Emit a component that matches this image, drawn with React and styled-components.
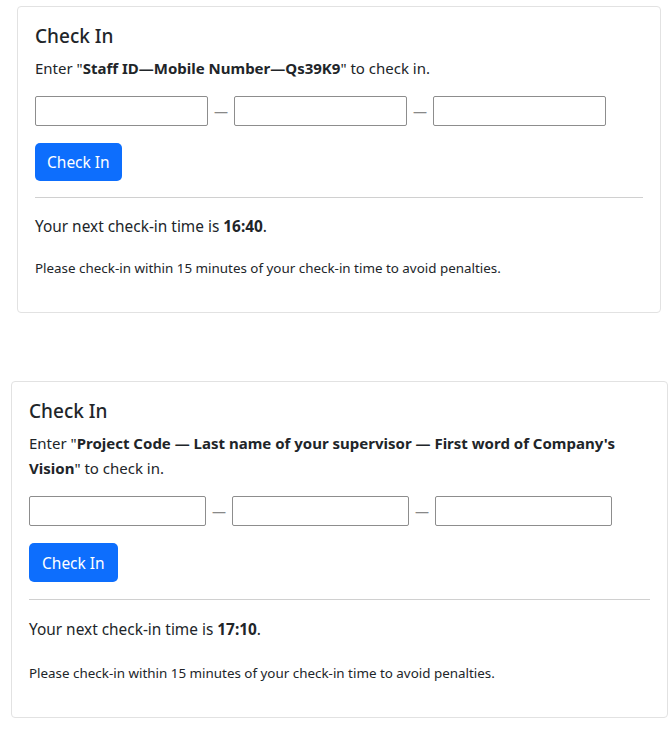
import React from 'react';
import styled, { createGlobalStyle } from 'styled-components';

const GlobalStyle = createGlobalStyle`
  html, body {
    margin: 0;
    padding: 0;
    background: #fff;
  }
  body {
    font-family: 'Noto Sans', 'Open Sans', sans-serif;
    color: #212529;
  }
`;

const cards = [
  {
    id: 1,
    offset: 17,
    width: 644,
    inputWidth: 173,
    loose: false,
    prompt: (
      <>
        Enter "<b>Staff ID—Mobile Number—Qs39K9</b>" to check in.
      </>
    ),
    time: '16:40',
  },
  {
    id: 2,
    offset: 11,
    width: 657,
    inputWidth: 177,
    loose: true,
    prompt: (
      <>
        Enter "<b>Project Code — Last name of your supervisor — First word of Company's Vision</b>" to check in.
      </>
    ),
    time: '17:10',
  },
];

const CheckInCard = ({ offset, width, inputWidth, loose, prompt, time }) => (
  <Card offset={offset} width={width}>
    <Title>Check In</Title>
    <Prompt>{prompt}</Prompt>
    <InputRow>
      <CodeInput w={inputWidth} />
      <Dash>—</Dash>
      <CodeInput w={inputWidth} />
      <Dash>—</Dash>
      <CodeInput w={inputWidth} />
    </InputRow>
    <Button loose={loose}>Check In</Button>
    <Divider loose={loose} />
    <NextTime loose={loose}>
      Your next check-in time is <b>{time}</b>.
    </NextTime>
    <Note>Please check-in within 15 minutes of your check-in time to avoid penalties.</Note>
  </Card>
);

const App = () => (
  <>
    <GlobalStyle />
    <Page>
      {cards.map((c) => (
        <CheckInCard key={c.id} {...c} />
      ))}
    </Page>
  </>
);

export default App;

const Page = styled.div`
  display: flex;
  flex-direction: column;
  gap: 68px;
  padding-top: 6px;
`;

const Card = styled.div`
  margin-left: ${(p) => p.offset}px;
  width: ${(p) => p.width}px;
  box-sizing: border-box;
  border: 1px solid #e2e2e2;
  border-radius: 4px;
  padding: 17px 17px 34px;
  background: #fff;
`;

const Title = styled.h5`
  margin: 0 0 8px;
  font-size: 19px;
  font-weight: 500;
  line-height: 24px;
`;

const Prompt = styled.p`
  margin: 0 0 15px;
  font-size: 15px;
  line-height: 25px;
  b {
    font-weight: 700;
  }
`;

const InputRow = styled.div`
  display: flex;
  align-items: center;
  margin-bottom: 17px;
`;

const CodeInput = styled.input`
  width: ${(p) => p.w}px;
  height: 30px;
  box-sizing: border-box;
  border: 1px solid #8d8d8d;
  border-radius: 2px;
  padding: 2px 6px;
  font-size: 14px;
`;

const Dash = styled.span`
  width: 26px;
  text-align: center;
  font-size: 14px;
  color: #888;
`;

const Button = styled.button`
  display: block;
  height: ${(p) => (p.loose ? 39 : 38)}px;
  padding: 0 ${(p) => (p.loose ? 13 : 12)}px;
  border: none;
  border-radius: 5px;
  background: #0d6efd;
  color: #fff;
  font-family: 'Noto Sans', sans-serif;
  font-size: 15.5px;
  margin-bottom: ${(p) => (p.loose ? 17 : 16)}px;
`;

const Divider = styled.hr`
  margin: 0 0 ${(p) => (p.loose ? 18 : 17)}px;
  border: none;
  border-top: 1px solid #d0d0d0;
`;

const NextTime = styled.p`
  margin: 0 0 ${(p) => (p.loose ? 21 : 19)}px;
  font-size: 15.4px;
  line-height: 24px;
  b {
    font-weight: 700;
  }
`;

const Note = styled.p`
  margin: 0;
  font-size: 13.4px;
  line-height: 20px;
`;
